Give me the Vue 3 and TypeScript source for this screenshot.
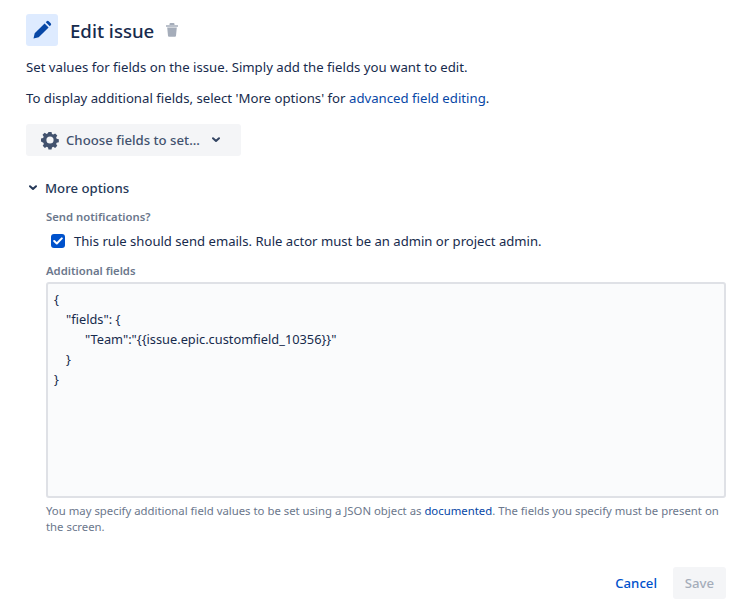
<script setup lang="ts">
const jsonLines: { text: string; indent: number }[] = [
  { text: '{', indent: 0 },
  { text: '"fields": {', indent: 12 },
  { text: '"Team":"{{issue.epic.customfield_10356}}"', indent: 31 },
  { text: '}', indent: 12 },
  { text: '}', indent: 0 },
]
</script>

<template>
  <main class="page">
    <header class="head">
      <span class="head-icon">
        <svg width="20" height="20" viewBox="0 0 20 20"><path d="M1.5 18.5l1.2-5.2L12.6 3.4l4 4-9.9 9.9z M13.8 2.2l.9-.9a1.4 1.4 0 0 1 2 0l2 2a1.4 1.4 0 0 1 0 2l-.9.9z" fill="#0747a6"/></svg>
      </span>
      <h1>Edit issue</h1>
      <svg class="trash" width="14" height="16" viewBox="0 0 14 16"><path d="M1 3.2h12v1.6H1z M4.5 3V2a1 1 0 0 1 1-1h3a1 1 0 0 1 1 1v1z M2.2 5.6h9.6l-.8 8.2a1 1 0 0 1-1 .9H4a1 1 0 0 1-1-.9z" fill="#a5adba"/></svg>
    </header>
    <p class="intro">Set values for fields on the issue. Simply add the fields you want to edit.</p>
    <p class="intro second">To display additional fields, select 'More options' for <a>advanced field editing</a>.</p>
    <button class="choose">
      <svg width="20" height="20" viewBox="0 0 20 20"><path fill-rule="evenodd" d="M8.3 1h3.4l.5 2.4 1.4.6 2.1-1.3 2.4 2.4-1.3 2.1.6 1.4 2.4.5v3.4l-2.4.5-.6 1.4 1.3 2.1-2.4 2.4-2.1-1.3-1.4.6-.5 2.4H8.3l-.5-2.4-1.4-.6-2.1 1.3-2.4-2.4 1.3-2.1-.6-1.4L0 11.7V8.3l2.4-.5.6-1.4-1.3-2.1 2.4-2.4 2.1 1.3 1.4-.6zM10 6a4 4 0 1 0 0 8 4 4 0 0 0 0-8z" fill="#42526e" transform="translate(1 1) scale(.9)"/></svg>
      <span>Choose fields to set...</span>
      <svg class="chev" width="8" height="6" viewBox="0 0 8 6"><path d="M1 1.2L4 4l3-2.8" fill="none" stroke="#344563" stroke-width="2" stroke-linecap="round" stroke-linejoin="round"/></svg>
    </button>
    <div class="more">
      <svg width="8" height="6" viewBox="0 0 8 6"><path d="M1 1.2L4 4l3-2.8" fill="none" stroke="#253858" stroke-width="2" stroke-linecap="round" stroke-linejoin="round"/></svg>
      <span>More options</span>
    </div>
    <section class="options">
      <div class="label">Send notifications?</div>
      <div class="check-row">
        <span class="box"><svg width="10" height="8" viewBox="0 0 10 8"><path d="M1.2 4l2.6 2.5L8.8 1.4" fill="none" stroke="#fff" stroke-width="2" stroke-linecap="round" stroke-linejoin="round"/></svg></span>
        <span>This rule should send emails. Rule actor must be an admin or project admin.</span>
      </div>
      <div class="label add">Additional fields</div>
      <div class="area"><div v-for="(l, i) in jsonLines" :key="i" class="code" :style="{ paddingLeft: l.indent + 'px' }">{{ l.text }}</div></div>
      <p class="help">You may specify additional field values to be set using a JSON object as <a>documented</a>. The fields you specify must be present on the screen.</p>
    </section>
    <footer class="foot">
      <a class="cancel">Cancel</a>
      <span class="save">Save</span>
    </footer>
  </main>
</template>

<style scoped>
.page { box-sizing: border-box; width: 736px; height: 616px; padding: 14px 10px 0 26px; font-family: "Noto Sans", "Open Sans", sans-serif; font-size: 13.2px; color: #172b4d; background: #fff; overflow: hidden; }
.head { display: flex; align-items: center; height: 32px; }
.head-icon { width: 32px; height: 32px; border-radius: 3px; background: #deebff; display: flex; align-items: center; justify-content: center; }
h1 { margin: 2px 0 0 12px; font-size: 18.6px; font-weight: 500; line-height: 30px; }
.trash { margin-left: 11px; }
.intro { margin: 11px 0 0; line-height: 20px; }
.second { margin-top: 11px; }
a { color: #0747a6; }
.choose { display: flex; align-items: center; box-sizing: border-box; width: 215px; height: 32px; margin-top: 16px; padding: 0 0 0 14px; border: 0; border-radius: 3px; background: #f4f5f7; color: #42526e; font: 500 13.2px "Noto Sans", sans-serif; }
.choose span { margin-left: 6px; }
.chev { margin-left: 12px; }
.more { display: flex; align-items: center; margin-top: 22px; height: 20px; font-weight: 500; color: #253858; padding-left: 3px; }
.more span { margin-left: 8px; }
.options { padding-left: 20px; }
.label { font-size: 11.3px; font-weight: 600; color: #6b778c; line-height: 16px; margin-top: 11px; }
.check-row { display: flex; align-items: center; height: 20px; margin-top: 6px; padding-left: 5px; font-size: 13.1px; }
.box { width: 14px; height: 14px; margin-right: 9px; border-radius: 3px; background: #0052cc; display: flex; align-items: center; justify-content: center; }
.add { margin-top: 12px; }
.area { box-sizing: border-box; height: 216px; margin-top: 3px; padding: 5px 6px; border: 2px solid #dfe1e6; border-radius: 3px; background: #fafbfc; }
.code { font-size: 12.8px; line-height: 20px; white-space: pre; color: #172b4d; }
.help { margin: 5px 0 0; font-size: 11.35px; line-height: 16px; color: #6b778c; }
.foot { display: flex; justify-content: flex-end; align-items: center; margin-top: 32px; }
.cancel { color: #0052cc; font-weight: 500; margin-right: 16px; }
.save { display: flex; align-items: center; justify-content: center; width: 53px; height: 32px; border-radius: 3px; background: #f4f5f7; color: #a5adba; font-weight: 500; }
</style>
